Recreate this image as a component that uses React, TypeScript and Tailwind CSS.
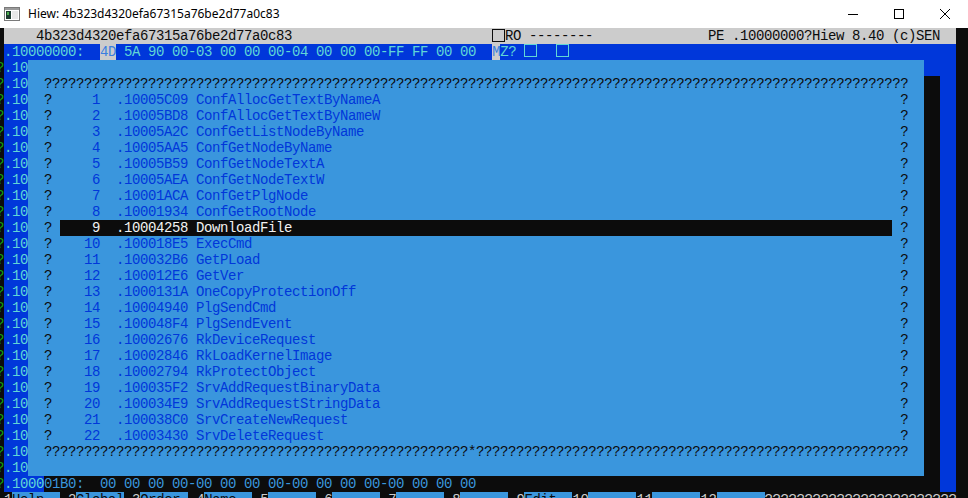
import React from 'react';

type Seg = { t: string; c: string; grow?: boolean; box?: string };

const BLK = 'bg-[#0c0c0c]';
const entries: [number, string, string][] = [
    [1, '10005C09', 'ConfAllocGetTextByNameA'],
    [2, '10005BD8', 'ConfAllocGetTextByNameW'],
    [3, '10005A2C', 'ConfGetListNodeByName'],
    [4, '10005AA5', 'ConfGetNodeByName'],
    [5, '10005B59', 'ConfGetNodeTextA'],
    [6, '10005AEA', 'ConfGetNodeTextW'],
    [7, '10001ACA', 'ConfGetPlgNode'],
    [8, '10001934', 'ConfGetRootNode'],
    [9, '10004258', 'DownloadFile'],
    [10, '100018E5', 'ExecCmd'],
    [11, '100032B6', 'GetPLoad'],
    [12, '100012E6', 'GetVer'],
    [13, '1000131A', 'OneCopyProtectionOff'],
    [14, '10004940', 'PlgSendCmd'],
    [15, '100048F4', 'PlgSendEvent'],
    [16, '10002676', 'RkDeviceRequest'],
    [17, '10002846', 'RkLoadKernelImage'],
    [18, '10002794', 'RkProtectObject'],
    [19, '100035F2', 'SrvAddRequestBinaryData'],
    [20, '100034E9', 'SrvAddRequestStringData'],
    [21, '100038C0', 'SrvCreateNewRequest'],
    [22, '10003430', 'SrvDeleteRequest'],
];

const SELECTED = 9;

// left gutter: col -1 (half hidden) + ".10" on blue
const gutter = (): Seg[] => [
    { t: '?', c: 'bg-[#0c0c0c] text-[#13a10e]' },
    { t: '.10', c: 'bg-[#0037da] text-[#61d6d6]' },
];

// right side of dialog: shadow + blue hex area
const rightSide = (shadow: boolean): Seg[] => [
    { t: '  ', c: shadow ? 'bg-[#0c0c0c]' : 'bg-[#0037da]' },
    { t: '  ', c: 'bg-[#0037da]' },
];

const dlg = (t: string, c = 'text-[#0c0c0c]'): Seg => ({ t, c: 'bg-[#3a96dd] ' + c });

function dialogRows(): Seg[][] {
    const rows: Seg[][] = [];
    rows.push([...gutter(), dlg(' '.repeat(112)), ...rightSide(false)]);
    rows.push([...gutter(), dlg('  ' + '?'.repeat(108) + '  '), ...rightSide(true)]);
    for (const [n, addr, name] of entries) {
        const mid = (String(n).padStart(5) + '  .' + addr + ' ' + name).padEnd(104);
        const sel = n === SELECTED;
        rows.push([
            ...gutter(),
            dlg('  ? '),
            sel ? { t: mid, c: 'bg-[#0c0c0c] text-[#f2f2f2]' } : dlg(mid, 'text-[#0037da]'),
            dlg(' ?  '),
            ...rightSide(true),
        ]);
    }
    rows.push([...gutter(), dlg('  ' + '?'.repeat(53) + '*' + '?'.repeat(54) + '  '), ...rightSide(true)]);
    rows.push([...gutter(), dlg(' '.repeat(112)), ...rightSide(true)]);
    return rows;
}

const topRow: Seg[] = [
    { t: ' ', c: BLK },
    { t: '    4b323d4320efa67315a76be2d77a0c83' + ' '.repeat(25), c: 'bg-[#cccccc] text-[#0c0c0c]' },
    { t: '', c: 'bg-[#cccccc]', box: 'border-[#0c0c0c] mt-px' },
    { t: 'RO --------', c: 'bg-[#cccccc] text-[#0c0c0c]' },
    { t: '', c: 'bg-[#cccccc]', grow: true },
    { t: 'PE .10000000?Hiew 8.40 (c)SEN  ', c: 'bg-[#cccccc] text-[#0c0c0c]' },
];

const hexRow: Seg[] = [
    { t: ' ', c: BLK },
    { t: '.10000000:  ', c: 'bg-[#0037da] text-[#61d6d6]' },
    { t: '4D', c: 'bg-[#cccccc] text-[#3a7fe0]' },
    { t: ' 5A 90 00-03 00 00 00-04 00 00 00-FF FF 00 00  ', c: 'bg-[#0037da] text-[#61d6d6]' },
    { t: 'M', c: 'bg-[#cccccc] text-[#3a7fe0]' },
    { t: 'Z? ', c: 'bg-[#0037da] text-[#61d6d6]' },
    { t: '', c: 'bg-[#0037da]', box: 'border-[#61d6d6]' },
    { t: '', c: 'bg-[#0037da] w-[19px]' },
    { t: '', c: 'bg-[#0037da]', box: 'border-[#61d6d6]' },
    { t: '', c: 'bg-[#0037da]', grow: true },
];

const shadowRow: Seg[] = [
    { t: '?', c: 'bg-[#0c0c0c] text-[#13a10e]' },
    { t: '.1000', c: 'bg-[#0037da] text-[#61d6d6]' },
    { t: '01B0:  00 00 00 00-00 00 00 00-00 00 00 00-00 00 00 00'.padEnd(112), c: 'bg-[#0c0c0c] text-[#3a96dd]' },
    { t: '  ', c: 'bg-[#0037da]' },
];

const keyLabels = ['Help', 'Global', 'Order', 'Name', '', '', '', '', 'Edit', '', '', ''];

function keyRow(): Seg[] {
    const segs: Seg[] = [{ t: ' ', c: BLK }];
    keyLabels.forEach((label, i) => {
        const k = i + 1;
        segs.push({ t: String(k), c: 'bg-[#0c0c0c] text-[#cccccc]' });
        segs.push({ t: label.padEnd(6), c: 'bg-[#3a96dd] text-[#0c0c0c]' });
        if (k < 9) segs.push({ t: ' ', c: BLK });
    });
    segs.push({ t: '?'.repeat(24), c: 'bg-[#0c0c0c] text-[#cccccc]' });
    return segs;
}

function Row({ segs }: { segs: Seg[] }) {
    return (
        <div className="flex h-4 w-[960px] whitespace-pre">
            {segs.map((s, i) =>
                s.box ? (
                    <span
                        key={i}
                        className={'flex h-4 items-start ' + s.c}
                    >
                        <span className={'block h-[13px] w-[13px] border ' + s.box} />
                    </span>
                ) : (
                    <span
                        key={i}
                        className={(s.grow ? 'flex-1 ' : '') + 'block h-4 ' + s.c}
                    >
                        {s.t}
                    </span>
                ),
            )}
        </div>
    );
}

function ConsoleIcon() {
    return (
        <svg width="16" height="14" viewBox="0 0 16 14">
            <rect x="0.5" y="0.5" width="15" height="13" fill="#fff" stroke="#7a7a7a" />
            <rect x="1" y="1" width="14" height="2" fill="#9a9a9a" />
            <rect x="2" y="4" width="5" height="8" fill="#1e3a2f" />
            <rect x="3" y="5" width="2" height="3" fill="#4caf50" />
            <rect x="8" y="4" width="6" height="8" fill="#e8e8e8" />
        </svg>
    );
}

export default function App() {
    return (
        <div className="h-[498px] w-[968px] overflow-hidden bg-[#0c0c0c]">
            <div className="flex h-[28px] items-center bg-white">
                <div className="ml-1 mr-2 flex w-4 items-center">
                    <ConsoleIcon />
                </div>
                <span className="font-['Noto_Sans',sans-serif] text-[12px] text-black">Hiew: 4b323d4320efa67315a76be2d77a0c83</span>
                <div className="ml-auto flex h-full items-center">
                    <div className="flex h-full w-[46px] items-center justify-center">
                        <svg width="10" height="10" viewBox="0 0 10 10">
                            <line x1="0" y1="5.5" x2="10" y2="5.5" stroke="#000" strokeWidth="1" />
                        </svg>
                    </div>
                    <div className="flex h-full w-[46px] items-center justify-center">
                        <svg width="10" height="10" viewBox="0 0 10 10">
                            <rect x="0.5" y="0.5" width="9" height="9" fill="none" stroke="#000" strokeWidth="1" />
                        </svg>
                    </div>
                    <div className="flex h-full w-[46px] items-center justify-center">
                        <svg width="10" height="10" viewBox="0 0 10 10">
                            <path d="M0 0 L10 10 M10 0 L0 10" stroke="#000" strokeWidth="1" />
                        </svg>
                    </div>
                </div>
            </div>
            <div className="-ml-1 font-['Liberation_Mono',monospace] text-[14px] leading-4 tracking-[-0.4px]">
                <Row segs={topRow} />
                <Row segs={hexRow} />
                {dialogRows().map((r, i) => (
                    <Row
                        key={i}
                        segs={r}
                    />
                ))}
                <Row segs={shadowRow} />
                <Row segs={keyRow()} />
            </div>
        </div>
    );
}
